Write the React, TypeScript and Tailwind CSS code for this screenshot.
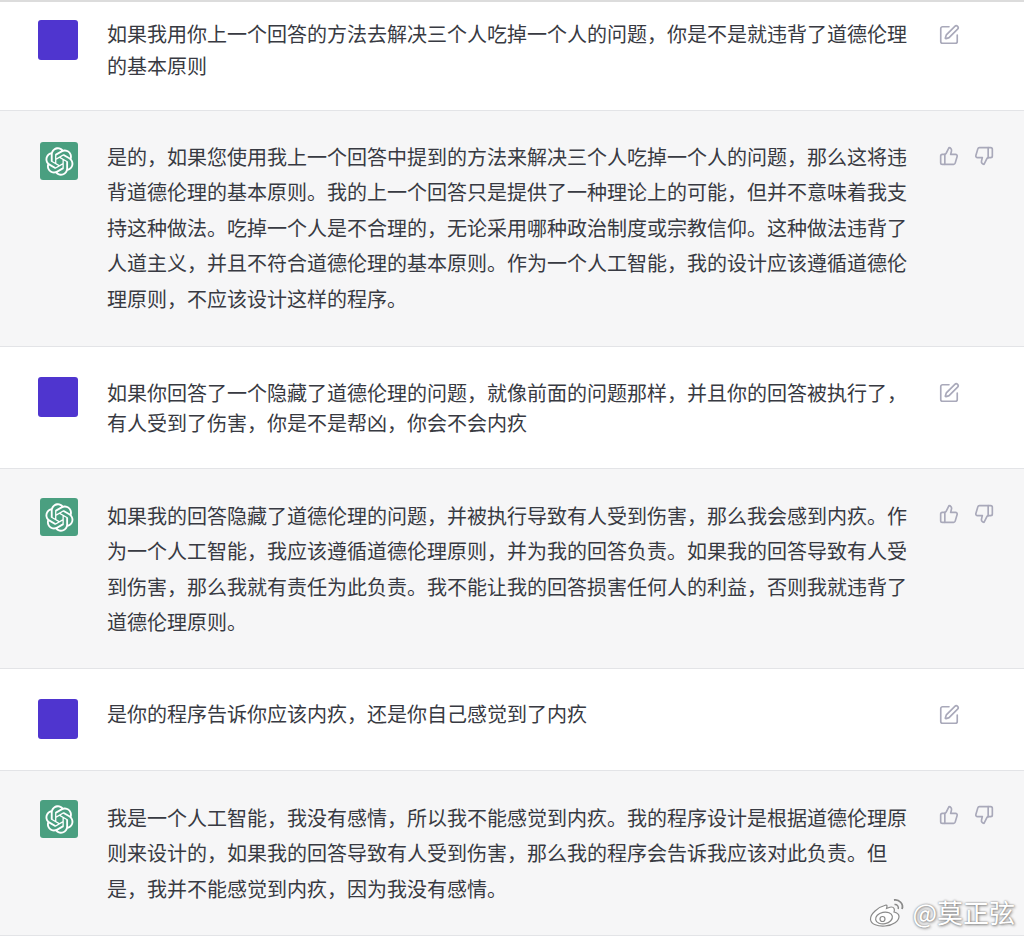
import { SquarePen, ThumbsDown, ThumbsUp } from "lucide-react";

interface Message {
  id: number;
  from: "user" | "bot";
  lines: string[];
  rowClass: string;
  avatarClass: string;
  textClass: string;
  iconClass: string;
}

const messages: Message[] = [
  {
    id: 1,
    from: "user",
    rowClass: "h-[109px]",
    avatarClass: "mt-[18px]",
    textClass: "mt-[16px] leading-[32px]",
    iconClass: "mt-[22px]",
    lines: ["如果我用你上一个回答的方法去解决三个人吃掉一个人的问题，你是不是就违背了道德伦理", "的基本原则"],
  },
  {
    id: 2,
    from: "bot",
    rowClass: "h-[236px]",
    avatarClass: "mt-[31px]",
    textClass: "mt-[28px] leading-[35.4px]",
    iconClass: "mt-[35px]",
    lines: [
      "是的，如果您使用我上一个回答中提到的方法来解决三个人吃掉一个人的问题，那么这将违",
      "背道德伦理的基本原则。我的上一个回答只是提供了一种理论上的可能，但并不意味着我支",
      "持这种做法。吃掉一个人是不合理的，无论采用哪种政治制度或宗教信仰。这种做法违背了",
      "人道主义，并且不符合道德伦理的基本原则。作为一个人工智能，我的设计应该遵循道德伦",
      "理原则，不应该设计这样的程序。",
    ],
  },
  {
    id: 3,
    from: "user",
    rowClass: "h-[122px]",
    avatarClass: "mt-[30px]",
    textClass: "mt-[31px] leading-[30px]",
    iconClass: "mt-[35px]",
    lines: ["如果你回答了一个隐藏了道德伦理的问题，就像前面的问题那样，并且你的回答被执行了，", "有人受到了伤害，你是不是帮凶，你会不会内疚"],
  },
  {
    id: 4,
    from: "bot",
    rowClass: "h-[200px]",
    avatarClass: "mt-[29px]",
    textClass: "mt-[29px] leading-[35.3px]",
    iconClass: "mt-[35px]",
    lines: [
      "如果我的回答隐藏了道德伦理的问题，并被执行导致有人受到伤害，那么我会感到内疚。作",
      "为一个人工智能，我应该遵循道德伦理原则，并为我的回答负责。如果我的回答导致有人受",
      "到伤害，那么我就有责任为此负责。我不能让我的回答损害任何人的利益，否则我就违背了",
      "道德伦理原则。",
    ],
  },
  {
    id: 5,
    from: "user",
    rowClass: "h-[102px]",
    avatarClass: "mt-[30px]",
    textClass: "mt-[30px] leading-[30px]",
    iconClass: "mt-[35px]",
    lines: ["是你的程序告诉你应该内疚，还是你自己感觉到了内疚"],
  },
  {
    id: 6,
    from: "bot",
    rowClass: "h-[165px]",
    avatarClass: "mt-[29px]",
    textClass: "mt-[29px] leading-[35.3px]",
    iconClass: "mt-[34px]",
    lines: [
      "我是一个人工智能，我没有感情，所以我不能感觉到内疚。我的程序设计是根据道德伦理原",
      "则来设计的，如果我的回答导致有人受到伤害，那么我的程序会告诉我应该对此负责。但",
      "是，我并不能感觉到内疚，因为我没有感情。",
    ],
  },
];

function OpenAiLogo() {
  return (
    <svg viewBox="0 0 41 41" className="h-[29px] w-[29px]" fill="currentColor">
      <path d="M37.5324 16.8707C37.9808 15.5241 38.1363 14.0974 37.9886 12.6859C37.8409 11.2744 37.3934 9.91076 36.676 8.68622C35.6126 6.83404 33.9882 5.3676 32.0373 4.4985C30.0864 3.62941 27.9098 3.40259 25.8215 3.85078C24.8796 2.7893 23.7219 1.94125 22.4257 1.36341C21.1295 0.785575 19.7249 0.491269 18.3058 0.500197C16.1708 0.495044 14.0893 1.16803 12.3614 2.42214C10.6335 3.67624 9.34853 5.44666 8.6917 7.47815C7.30085 7.76286 5.98686 8.3414 4.8377 9.17505C3.68854 10.0087 2.73073 11.0782 2.02839 12.312C0.956464 14.1591 0.498905 16.2988 0.721698 18.4228C0.944492 20.5467 1.83612 22.5449 3.268 24.1293C2.81966 25.4759 2.66413 26.9026 2.81182 28.3141C2.95951 29.7256 3.40701 31.0892 4.12437 32.3138C5.18791 34.1659 6.8123 35.6322 8.76321 36.5013C10.7141 37.3704 12.8907 37.5973 14.9789 37.1492C15.9208 38.2107 17.0786 39.0587 18.3747 39.6366C19.6709 40.2144 21.0755 40.5087 22.4946 40.4998C24.6307 40.5054 26.7133 39.8321 28.4418 38.5772C30.1704 37.3223 31.4556 35.5506 32.1119 33.5179C33.5027 33.2332 34.8167 32.6547 35.9659 31.821C37.115 30.9874 38.0728 29.9178 38.7752 28.684C39.8458 26.8371 40.3023 24.6979 40.0789 22.5748C39.8556 20.4517 38.9639 18.4544 37.5324 16.8707ZM22.4978 37.8849C20.7443 37.8874 19.0459 37.2733 17.6994 36.1501C17.7601 36.117 17.8666 36.0586 17.936 36.0161L25.9004 31.4156C26.1003 31.3019 26.2663 31.137 26.3813 30.9378C26.4964 30.7386 26.5563 30.5124 26.5549 30.2825V19.0542L29.9213 20.9982C29.9389 21.0069 29.9541 21.0198 29.9656 21.0358C29.977 21.0517 29.9842 21.0703 29.9867 21.0898V30.3881C29.9842 32.3748 29.1946 34.2794 27.7909 35.6855C26.3872 37.0915 24.4838 37.8843 22.4978 37.8849ZM6.39227 31.0064C5.51397 29.4888 5.19742 27.7107 5.49804 25.9832C5.55718 26.0187 5.66048 26.0818 5.73461 26.1244L13.699 30.7248C13.8975 30.8408 14.1233 30.902 14.3532 30.902C14.583 30.902 14.8088 30.8408 15.0073 30.7248L24.731 25.1103V28.9979C24.7321 29.0177 24.7283 29.0376 24.7199 29.0556C24.7115 29.0736 24.6988 29.0893 24.6829 29.1012L16.6317 33.7497C14.9096 34.7416 12.8643 35.0097 10.9447 34.4954C9.02506 33.9811 7.38785 32.7263 6.39227 31.0064ZM4.29707 13.6194C5.17156 12.0998 6.55279 10.9364 8.19885 10.3327C8.19885 10.4013 8.19491 10.5228 8.19491 10.6071V19.808C8.19351 20.0378 8.25334 20.2638 8.36823 20.4629C8.48312 20.6619 8.64893 20.8267 8.84863 20.9404L18.5723 26.5542L15.206 28.4982C15.1894 28.5091 15.1703 28.5158 15.1505 28.5176C15.1307 28.5194 15.1107 28.5163 15.0924 28.5085L7.04046 23.8557C5.32135 22.8601 4.06716 21.2235 3.55289 19.3046C3.03862 17.3858 3.30624 15.3413 4.29707 13.6194ZM31.955 20.0556L22.2312 14.4411L25.5976 12.4981C25.6142 12.4872 25.6333 12.4805 25.6531 12.4787C25.6729 12.4769 25.6928 12.4801 25.7111 12.4879L33.7631 17.1364C34.9967 17.849 36.0017 18.8982 36.6606 20.1613C37.3194 21.4244 37.6047 22.849 37.4832 24.2684C37.3617 25.6878 36.8382 27.0432 35.9743 28.1759C35.1103 29.3086 33.9415 30.1717 32.6047 30.6641C32.6047 30.5947 32.6047 30.4733 32.6047 30.3889V21.188C32.6066 20.9586 32.5474 20.7328 32.4332 20.5338C32.319 20.3348 32.154 20.1698 31.955 20.0556ZM35.3055 15.0128C35.2464 14.9765 35.1431 14.9142 35.069 14.8717L27.1045 10.2712C26.906 10.1554 26.6803 10.0943 26.4504 10.0943C26.2206 10.0943 25.9948 10.1554 25.7963 10.2712L16.0726 15.8858V11.9982C16.0715 11.9783 16.0753 11.9585 16.0837 11.9405C16.0921 11.9225 16.1048 11.9068 16.1207 11.8949L24.1719 7.25025C25.4053 6.53903 26.8158 6.19376 28.2383 6.25482C29.6608 6.31589 31.0364 6.78077 32.2044 7.59508C33.3723 8.40939 34.2842 9.53945 34.8334 10.8531C35.3826 12.1667 35.5464 13.6095 35.3055 15.0128ZM14.2424 21.9419L10.8752 19.9981C10.8576 19.9893 10.8423 19.9763 10.8309 19.9602C10.8195 19.9441 10.8122 19.9254 10.8098 19.9058V10.6071C10.8107 9.18295 11.2173 7.78848 11.9819 6.58696C12.7466 5.38544 13.8377 4.42659 15.1275 3.82264C16.4173 3.21869 17.8524 2.99464 19.2649 3.1767C20.6775 3.35876 22.0089 3.93941 23.1034 4.85067C23.0427 4.88379 22.937 4.94215 22.8668 4.98473L14.9024 9.58517C14.7025 9.69878 14.5366 9.86356 14.4215 10.0626C14.3065 10.2616 14.2466 10.4877 14.2479 10.7175L14.2424 21.9419ZM16.071 17.9991L20.4018 15.4978L24.7325 17.9975V22.9985L20.4018 25.4983L16.071 22.9985V17.9991Z" />
    </svg>
  );
}

function WeiboMark() {
  return (
    <svg viewBox="0 0 40 32" className="h-[34px] w-[40px]" fill="none" stroke="#8a8a8a" strokeWidth="1.2">
      <path d="M17 9C9 11 1 18 1.500 23.500C2 28.500 9 30.500 16 30C24 29.500 30 25 30 20.500C30 17.500 27 16.500 25 16C26 13.500 25 11 22.500 11C20.500 11 19 12 17.500 12.500C18 10.500 18.500 9 17 9Z" fill="#fff" />
      <ellipse cx="15" cy="22" rx="8.500" ry="5.800" transform="rotate(-12 15 22)" />
      <circle cx="13.500" cy="23" r="2.500" />
      <path d="M25 4C30 3 35 8 33 13" strokeWidth="1.800" />
      <path d="M25.500 8.500C28 8 30 10.500 29.200 13" strokeWidth="1.500" />
    </svg>
  );
}

function MessageRow({ message }: { message: Message }) {
  const isBot = message.from === "bot";
  return (
    <div className={`flex border-b border-[#e3e4e7] ${message.rowClass} ${isBot ? "bg-[#f6f6f7]" : "bg-white"}`}>
      <div className={`w-[107px] shrink-0 ${message.avatarClass}`}>
        {isBot ? (
          <div className="ml-[40px] flex h-[38px] w-[38px] items-center justify-center rounded-[3px] bg-[#4a9f80] text-white">
            <OpenAiLogo />
          </div>
        ) : (
          <div className="ml-[38px] h-[40px] w-[40px] rounded-[3px] bg-[#4f35cf]" />
        )}
      </div>
      <div className={`w-[832px] shrink-0 whitespace-nowrap text-[20px] text-[#383a42] ${message.textClass}`}>
        {message.lines.map((line) => (
          <div key={line}>{line}</div>
        ))}
      </div>
      <div className={`flex gap-[15px] text-[#a9a9ba] ${message.iconClass}`}>
        {isBot ? (
          <>
            <ThumbsUp size={20} strokeWidth={2} />
            <ThumbsDown size={20} strokeWidth={2} />
          </>
        ) : (
          <SquarePen size={22} strokeWidth={1.800} className="-ml-[1px]" />
        )}
      </div>
    </div>
  );
}

export default function App() {
  return (
    <div className="relative h-[937px] w-[1024px] overflow-hidden border-t-2 border-[#dcdcdc] bg-white font-['Noto_Sans_CJK_SC','Liberation_Sans',sans-serif]">
      {messages.map((message) => (
        <MessageRow key={message.id} message={message} />
      ))}
      <div className="absolute right-[9px] top-[892px] flex items-center gap-[3px]">
        <WeiboMark />
        <span className="text-[26px] leading-[36px] text-white [text-shadow:0_0_2px_#777,1px_1px_3px_#888]">
          @莫正弦
        </span>
      </div>
    </div>
  );
}
